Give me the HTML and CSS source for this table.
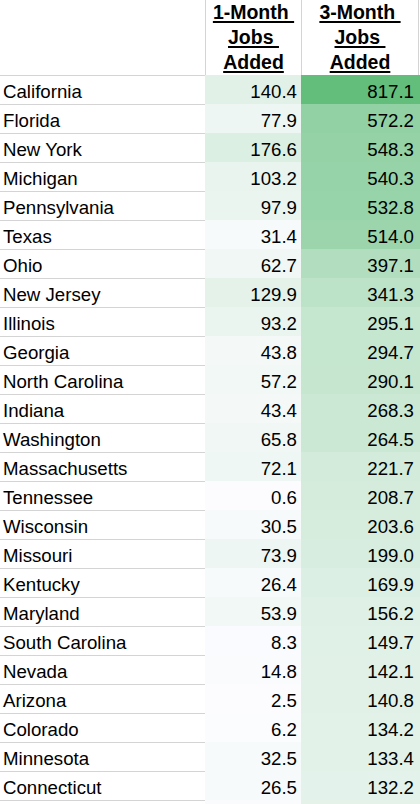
FILE: index.html
```html
<!DOCTYPE html>
<html lang="en">
<head>
    <meta charset="UTF-8">
    <meta name="viewport" content="width=device-width, initial-scale=1.0">
    <title>Jobs Added by State</title>
    <link rel="stylesheet" href="styles.css">
</head>
<body>
<div class="sheet" id="sheet">
    <div class="head head-a"></div>
    <div class="head head-col"><span>1-Month&nbsp;<br>Jobs&nbsp;<br>Added</span></div>
    <div class="head head-col"><span>3-Month&nbsp;<br>Jobs&nbsp;<br>Added</span></div>
    <div class="head head-end"></div>
</div>
<script>
    let states = [
        ["California", 140.4, 817.1],
        ["Florida", 77.9, 572.2],
        ["New York", 176.6, 548.3],
        ["Michigan", 103.2, 540.3],
        ["Pennsylvania", 97.9, 532.8],
        ["Texas", 31.4, 514.0],
        ["Ohio", 62.7, 397.1],
        ["New Jersey", 129.9, 341.3],
        ["Illinois", 93.2, 295.1],
        ["Georgia", 43.8, 294.7],
        ["North Carolina", 57.2, 290.1],
        ["Indiana", 43.4, 268.3],
        ["Washington", 65.8, 264.5],
        ["Massachusetts", 72.1, 221.7],
        ["Tennessee", 0.6, 208.7],
        ["Wisconsin", 30.5, 203.6],
        ["Missouri", 73.9, 199.0],
        ["Kentucky", 26.4, 169.9],
        ["Maryland", 53.9, 156.2],
        ["South Carolina", 8.3, 149.7],
        ["Nevada", 14.8, 142.1],
        ["Arizona", 2.5, 140.8],
        ["Colorado", 6.2, 134.2],
        ["Minnesota", 32.5, 133.4],
        ["Connecticut", 26.5, 132.2]
    ];

    // white -> green color scale, shared by both columns
    let low = 0, high = 817.1;
    function scale(v) {
        let t = Math.max(0, Math.min(1, (v - low) / (high - low)));
        let r = Math.round(252 + (99 - 252) * t);
        let g = Math.round(252 + (190 - 252) * t);
        let b = Math.round(255 + (123 - 255) * t);
        return `rgb(${r}, ${g}, ${b})`;
    }

    let sheet = document.getElementById("sheet");

    function addRow(name, one, three, blank) {
        let a = document.createElement("div");
        a.className = "name";
        a.textContent = name;
        sheet.appendChild(a);

        [one, three].forEach((v, i) => {
            let c = document.createElement("div");
            c.className = i === 0 ? "num" : "num num-wide";
            c.style.background = scale(v);
            c.textContent = blank ? "" : v.toFixed(1);
            sheet.appendChild(c);
        });
    }

    states.forEach(s => addRow(s[0], s[1], s[2], false));
    addRow("", 18, 130, true);
</script>
</body>
</html>
```

FILE: styles.css
```css
body {
    margin: 0;
    background: #fff;
    font-family: "Liberation Sans", Arial, sans-serif;
    color: #000;
    overflow: hidden;
}

.sheet {
    display: grid;
    grid-template-columns: 205px 96px 117px 2px;
    grid-template-rows: 75px;
    grid-auto-rows: 29px;
    width: 420px;
}

.head {
    box-sizing: border-box;
    height: 75px;
}

.head-col,
.head-end {
    border-left: 1px solid #d4d4d4;
}

.head-col {
    display: flex;
    align-items: flex-end;
    justify-content: center;
    text-align: center;
    font-size: 19.5px;
    font-weight: bold;
    line-height: 25px;
}

.head-col span {
    text-decoration: underline;
    text-decoration-thickness: 2px;
    text-underline-offset: 2px;
    white-space: nowrap;
}

.name,
.num {
    box-sizing: border-box;
    display: flex;
    align-items: flex-end;
    font-size: 18.67px;
    line-height: 21px;
    padding-bottom: 2px;
    white-space: nowrap;
}

.name {
    border-top: 1px solid #d4d4d4;
    padding-left: 3px;
}

.num {
    justify-content: flex-end;
    padding-right: 4px;
}

.num-wide {
    grid-column: span 2;
    padding-right: 6px;
}
```
